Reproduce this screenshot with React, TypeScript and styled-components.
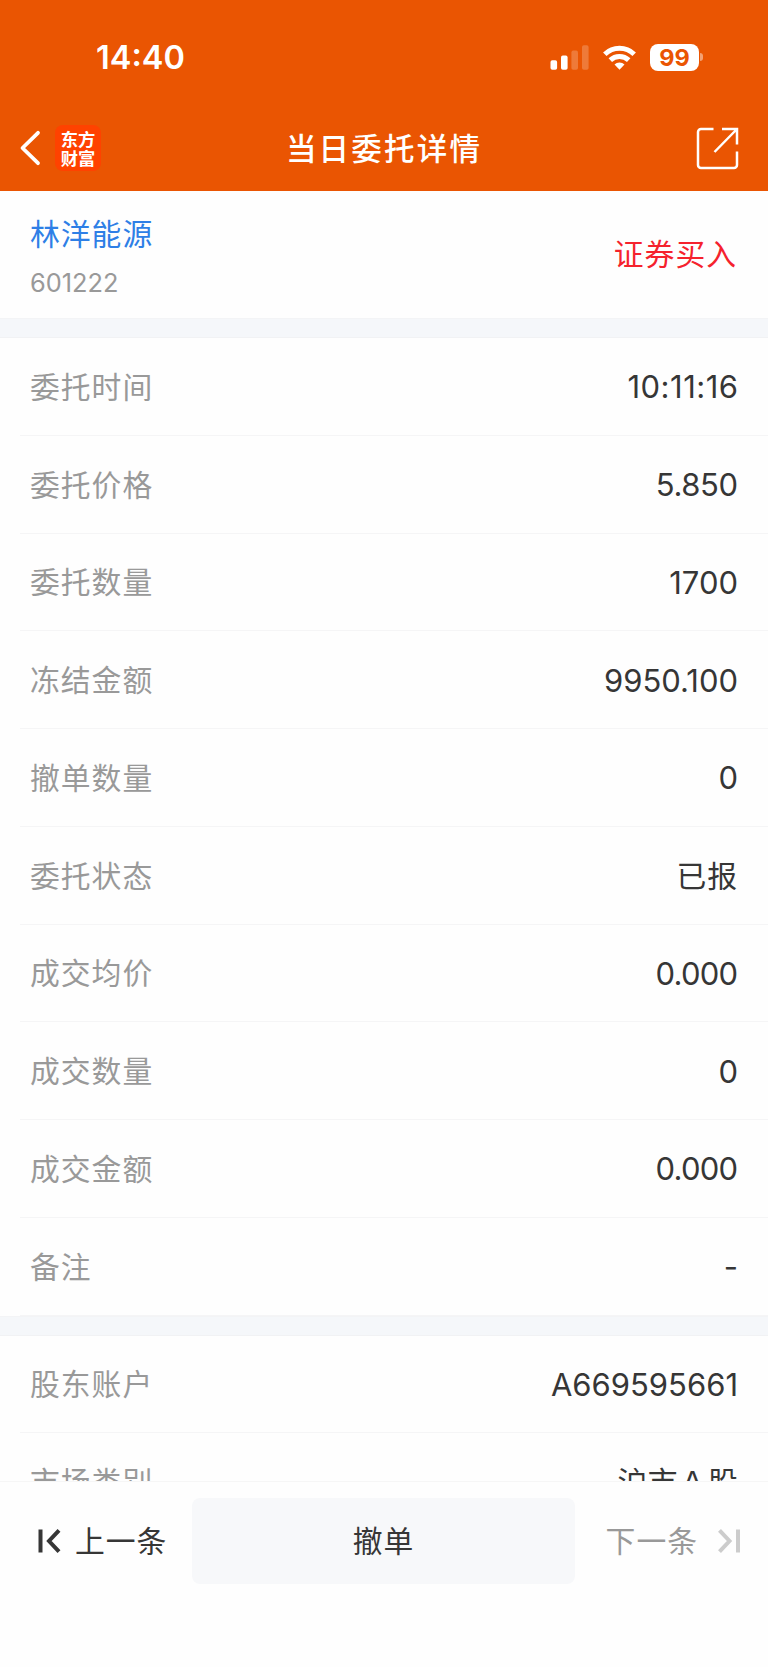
import React from 'react';
import styled, { createGlobalStyle } from 'styled-components';

const Global = createGlobalStyle`
  * { box-sizing: border-box; }
  body {
    margin: 0;
    background: #fefefe;
    font-family: Inter, "Noto Sans CJK SC", sans-serif;
    color: #363636;
  }
  svg { display: block; flex: none; }
  button { font: inherit; color: inherit; border: 0; background: none; padding: 0; margin: 0; }
`;

const Screen = styled.div`
  width: 768px;
  height: 1667px;
  display: flex;
  flex-direction: column;
  overflow: hidden;
`;

const Header = styled.header`
  height: 191px;
  flex: none;
  background: #ea5502;
  color: #fff;
`;

const StatusBar = styled.div`
  height: 114px;
  padding: 0 65px 0 96px;
  display: flex;
  align-items: center;
  justify-content: space-between;
`;

const Clock = styled.span`
  padding-top: 2px;
  font-size: 32.5px;
  font-weight: 600;
  line-height: 40px;
`;

const StatusIcons = styled.div`
  display: flex;
  align-items: center;
`;

const Signal = styled.svg`margin-right: 14px;`;
const Wifi = styled.svg`margin-right: 14px;`;

const Battery = styled.div`
  width: 49px;
  height: 27px;
  border-radius: 8px;
  background: #fff;
  color: #ea5502;
  font-size: 23.5px;
  font-weight: 700;
  line-height: 27px;
  text-align: center;
`;

const BatteryTip = styled.div`
  width: 3px;
  height: 8px;
  margin-left: 1px;
  border-radius: 0 3px 3px 0;
  background: rgba(255, 255, 255, 0.45);
`;

const NavBar = styled.nav`
  height: 68px;
  padding: 0 29px 0 19px;
  display: grid;
  grid-template-columns: 1fr auto 1fr;
  align-items: center;
`;

const NavLeft = styled.div`
  display: flex;
  align-items: center;
  gap: 14px;
`;

const Logo = styled.div`
  width: 46px;
  height: 46px;
  display: flex;
  flex-direction: column;
  align-items: center;
  justify-content: center;
  border-radius: 8px;
  background: #ff4200;
  font-family: "Noto Sans CJK SC", sans-serif;
  font-size: 17.3px;
  font-weight: 700;
  line-height: 19.5px;
`;

const Title = styled.h1`
  margin: 0;
  padding: 2px 0 0 10px;
  font-size: 30.5px;
  font-weight: 500;
  letter-spacing: 2.2px;
  line-height: 44px;
`;

const Share = styled.button`justify-self: end;`;

const Content = styled.main`
  flex: 1;
  min-height: 0;
  overflow: hidden;
`;

const Stock = styled.section`
  height: 127px;
  padding: 0 31px 0 30px;
  display: flex;
  align-items: center;
  justify-content: space-between;
`;

const StockName = styled.div`
  padding-top: 2px;
  color: #2e7fe6;
  font-size: 29.8px;
  letter-spacing: 1px;
  line-height: 44px;
`;

const StockCode = styled.div`
  margin-top: 10px;
  color: #999;
  font-size: 25.4px;
  line-height: 34px;
`;

const Side = styled.div`
  padding-bottom: 2px;
  color: #f5222d;
  font-size: 29.8px;
  letter-spacing: 1px;
  line-height: 44px;
`;

const Band = styled.div`
  height: 20px;
  background: #f5f7fa;
  border-top: 1px solid #f3f4f6;
  border-bottom: 1px solid #f1f2f4;
`;

const Row = styled.div`
  height: 97.75px;
  margin-left: 20px;
  padding: 0 30px 0 10px;
  display: flex;
  align-items: center;
  justify-content: space-between;
  border-bottom: 1px solid #f5f5f6;
`;

const Label = styled.span`
  padding-bottom: 3px;
  color: #999;
  font-size: 29.8px;
  letter-spacing: 1px;
`;

const Value = styled.span<{ $track: number }>`
  padding-top: 1px;
  font-size: 31px;
  letter-spacing: ${p => p.$track}px;
  margin-right: ${p => -p.$track}px;
`;

const TextValue = styled.span<{ $track: number }>`
  padding-bottom: 3px;
  font-size: 29.8px;
  letter-spacing: ${p => p.$track}px;
`;

const Footer = styled.footer`
  height: 186px;
  flex: none;
  padding: 16px 27px 0 37px;
  display: grid;
  grid-template-columns: 155px 383px 1fr;
  align-items: start;
  background: #fefefe;
  border-top: 1px solid #f6f6f6;
`;

const Step = styled.button<{ $off?: boolean }>`
  height: 86px;
  display: flex;
  align-items: center;
  justify-content: ${p => (p.$off ? 'flex-end' : 'flex-start')};
  gap: ${p => (p.$off ? '19px' : '14px')};
  font-size: 29.8px;
  letter-spacing: 1px;
  color: ${p => (p.$off ? '#999' : '#363636')};
`;

const StepText = styled.span`padding-bottom: 5px;`;

const Cancel = styled.button`
  height: 86px;
  padding-bottom: 5px;
  border-radius: 8px;
  background: #f7f8fa;
  font-size: 29.8px;
  letter-spacing: 1px;
`;

type Item = { label: string; value: string; track?: number; text?: boolean };

const orderRows: Item[] = [
  { label: '委托时间', value: '10:11:16', track: 0.5 },
  { label: '委托价格', value: '5.850', track: -0.4 },
  { label: '委托数量', value: '1700' },
  { label: '冻结金额', value: '9950.100' },
  { label: '撤单数量', value: '0' },
  { label: '委托状态', value: '已报', text: true, track: 1 },
  { label: '成交均价', value: '0.000', track: -0.8 },
  { label: '成交数量', value: '0' },
  { label: '成交金额', value: '0.000', track: -0.8 },
  { label: '备注', value: '-' },
];

const accountRows: Item[] = [
  { label: '股东账户', value: 'A669595661' },
  { label: '市场类别', value: '沪市Ａ股', text: true, track: 0.3 },
];

const Rows = ({ items }: { items: Item[] }) => (
  <section>
    {items.map(({ label, value, track = 0, text }) => (
      <Row key={label}>
        <Label>{label}</Label>
        {text ? <TextValue $track={track}>{value}</TextValue> : <Value $track={track}>{value}</Value>}
      </Row>
    ))}
  </section>
);

export default function App() {
  return (
    <Screen>
      <Global />
      <Header>
        <StatusBar>
          <Clock>14:40</Clock>
          <StatusIcons>
            <Signal width="39" height="25" viewBox="0 0 39 25" fill="#fff">
              <rect x="0.5" y="15.2" width="6.6" height="9.5" rx="1.8" />
              <rect x="11" y="10.6" width="6.6" height="14.1" rx="1.8" />
              <rect x="21.4" y="5.6" width="6.6" height="19.1" rx="1.8" opacity="0.22" />
              <rect x="32" y="0.3" width="6.6" height="24.4" rx="1.8" opacity="0.22" />
            </Signal>
            <Wifi width="33" height="25" viewBox="0 0 33 25" fill="none" stroke="#fff" strokeWidth="5">
              <path d="M1.800 9.200a21.200 21.200 0 0 1 29.400 0" />
              <path d="M7.300 15.100a13.300 13.300 0 0 1 18.400 0" />
              <path d="M16.500 24.800l-5-5.200a7 7 0 0 1 10 0z" fill="#fff" stroke="none" />
            </Wifi>
            <Battery>99</Battery>
            <BatteryTip />
          </StatusIcons>
        </StatusBar>
        <NavBar>
          <NavLeft>
            <svg width="22" height="36" viewBox="0 0 22 36" fill="none" stroke="#fff" strokeWidth="3.8" strokeLinecap="round" strokeLinejoin="round">
              <path d="M19 2.800L3.500 18 19 33.200" />
            </svg>
            <Logo>
              <span>东方</span>
              <span>财富</span>
            </Logo>
          </NavLeft>
          <Title>当日委托详情</Title>
          <Share aria-label="分享">
            <svg width="43" height="43" viewBox="0 0 43 43" fill="none" stroke="#fff" strokeWidth="2.5">
              <path d="M17.500 2H5a3 3 0 0 0-3 3v33a3 3 0 0 0 3 3h33a3 3 0 0 0 3-3V24.500" />
              <path d="M26 2h15v15.500M41 2L18.500 25" />
            </svg>
          </Share>
        </NavBar>
      </Header>
      <Content>
        <Stock>
          <div>
            <StockName>林洋能源</StockName>
            <StockCode>601222</StockCode>
          </div>
          <Side>证券买入</Side>
        </Stock>
        <Band />
        <Rows items={orderRows} />
        <Band />
        <Rows items={accountRows} />
      </Content>
      <Footer>
        <Step>
          <svg width="24" height="26" viewBox="0 0 24 26" fill="none" stroke="#363636" strokeWidth="4">
            <path d="M3.500 1.500v23M22 2.300L12 13l10 10.700" />
          </svg>
          <StepText>上一条</StepText>
        </Step>
        <Cancel>撤单</Cancel>
        <Step $off>
          <StepText>下一条</StepText>
          <svg width="24" height="26" viewBox="0 0 24 26" fill="none" stroke="#ccc" strokeWidth="4">
            <path d="M21 1.500v23M2.500 2.300L12.500 13l-10 10.700" />
          </svg>
        </Step>
      </Footer>
    </Screen>
  );
}
